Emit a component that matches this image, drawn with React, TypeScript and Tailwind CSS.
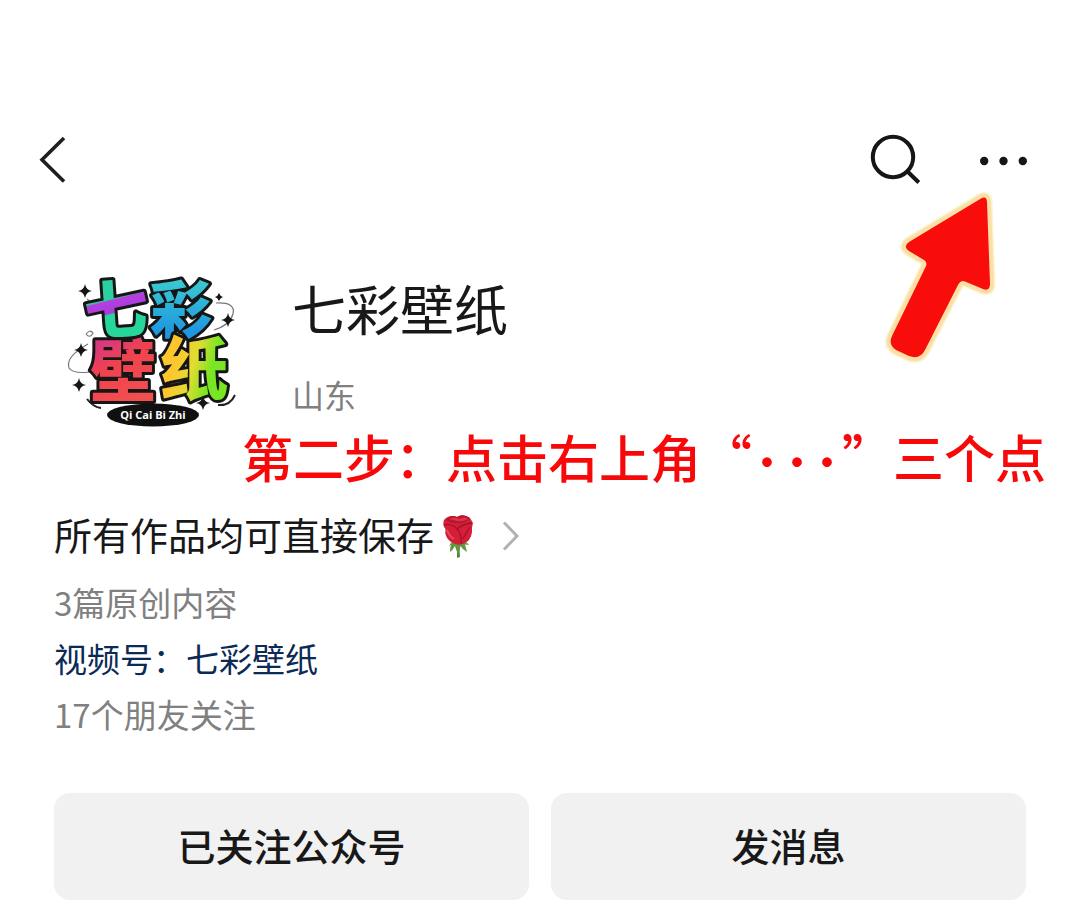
interface StatLine {
  text: string;
  href?: string;
}

const STATS: StatLine[] = [
  { text: "3篇原创内容" },
  { text: "视频号：七彩壁纸", href: "#channel" },
  { text: "17个朋友关注" },
];

const ACTIONS = ["已关注公众号", "发消息"];

const SPARKLES = [
  { x: 85, y: 291, r: 7 },
  { x: 228, y: 320, r: 7 },
  { x: 81, y: 350, r: 7 },
  { x: 79, y: 385, r: 7 },
  { x: 203, y: 403, r: 7 },
  { x: 219, y: 297, r: 4 },
];

function BackIcon() {
  return (
    <svg viewBox="38 134 32 52" className="h-[52px] w-8" fill="none" stroke="#1f1f1f" strokeWidth="3.6">
      <path d="M64 138 L42 159.800 L64 181.500" />
    </svg>
  );
}

function SearchIcon() {
  return (
    <svg viewBox="868 132 56 56" className="size-14" fill="none" stroke="#161616" strokeWidth="4">
      <circle cx="893" cy="157" r="20.200" />
      <path d="M907.500 171.500 L918.800 182.500" />
    </svg>
  );
}

function MoreIcon() {
  return (
    <svg viewBox="976 150 56 20" className="h-5 w-14" fill="#161616">
      <circle cx="984.200" cy="161" r="4.200" />
      <circle cx="1003.500" cy="161" r="4.200" />
      <circle cx="1022.800" cy="161" r="4.200" />
    </svg>
  );
}

function PointerArrow() {
  const shape =
    "M981 198.500 Q986.500 195.500 987 202 L990 284 Q990 291.500 983 289 L965 281.500 Q961 280 958.500 284 L925 350 Q920 360 909 356 L896 350 Q888 345 892 336 L926 266 Q927.500 262.500 924 260 L909 251 Q902.500 246.500 909 242 Z";
  return (
    <svg viewBox="880 188 120 180" className="h-[180px] w-[120px]" aria-hidden="true">
      <path d={shape} fill="none" stroke="#fdf3cf" strokeWidth="11" strokeLinejoin="round" />
      <path d={shape} fill="#f90d0b" stroke="#fbdfa6" strokeWidth="8" strokeLinejoin="round" />
      <path d={shape} fill="#f90d0b" />
    </svg>
  );
}

function Rose() {
  return (
    <svg viewBox="441 511 34 48" className="h-12 w-[34px]" aria-hidden="true">
      <path d="M457 543 L459 543 L460 558 L457 559 Z" fill="#4f8a3c" />
      <path
        d="M449 547 Q452 541 458 542 Q465 541 469 546 L465 545.500 Q466 549 467 553 Q462 550 460.500 547 Q460 552 458 555 Q456 551 455 547 Q453 551 450 553 Q450 548 451 546 Z"
        fill="#619844"
      />
      <path
        d="M444 521 Q449 515 457 518 Q463 514 470 519 L473 524 Q471.500 528 472 533 Q471 542 463 545 Q457 547 451 543 Q444 538 445.500 530 Q442 526 444 521 Z"
        fill="#d51f38"
      />
      <path d="M446 521 Q451 515 457 518 Q463 514 470 519 Q467 524 459 524 Q451 525 446 521 Z" fill="#b4182e" />
      <path d="M449 520 Q455 517 459 520 Q465 517 468 520 Q463 523 457 522 Z" fill="#df3148" />
      <path
        d="M444 526 Q453 524 458 531 Q462 536 461 545 M472 524 Q462 525 457 530 M470 528 Q466 534 463 540"
        fill="none"
        stroke="#a3122a"
        strokeWidth="1.300"
      />
      <path d="M447 531 Q449 537 454 540" fill="none" stroke="#e84a5d" strokeWidth="2" />
    </svg>
  );
}

function Logo() {
  return (
    <svg viewBox="54 252 200 200" className="size-[200px] shrink-0" role="img" aria-label="七彩壁纸">
      <defs>
        <linearGradient id="qi" gradientUnits="userSpaceOnUse" x1="111" y1="282" x2="121" y2="338">
          <stop offset="0.290" stopColor="#2cd0a0" />
          <stop offset="0.320" stopColor="#b63ee0" />
          <stop offset="0.530" stopColor="#a83cdc" />
          <stop offset="0.560" stopColor="#27d69a" />
        </linearGradient>
        <linearGradient id="cai" x1="0" y1="0" x2="0" y2="1">
          <stop offset="0.100" stopColor="#3fd3cf" />
          <stop offset="0.800" stopColor="#1e96e0" />
        </linearGradient>
        <linearGradient id="bi" x1="0" y1="0" x2="0.400" y2="1">
          <stop offset="0.100" stopColor="#c832a0" />
          <stop offset="0.550" stopColor="#f0424e" />
          <stop offset="1" stopColor="#f25050" />
        </linearGradient>
        <linearGradient id="zhi" x1="0" y1="0" x2="1" y2="0.400">
          <stop offset="0.350" stopColor="#fdc62e" />
          <stop offset="0.600" stopColor="#e2dc30" />
          <stop offset="0.850" stopColor="#78e622" />
        </linearGradient>
      </defs>
      <g fill="none" stroke="#777" strokeWidth="1.200">
        <path d="M216 303 Q236 302 233 314 Q230 325 214 330" />
        <path d="M88 344 Q65 357 69 368 Q73 374 89 372" />
        <path d="M87 299 L95 306 M86 334 q4 -5 7 -1 q-3 6 -7 1" />
      </g>
      <g fill="none" stroke="#222" strokeWidth="2">
        <path d="M87 399 Q93 407 101 408 M218 405 Q230 406 235 395" />
      </g>
      <g
        fontFamily="'Noto Sans CJK SC', sans-serif"
        fontWeight="900"
        stroke="#161616"
        strokeWidth="6"
        strokeLinejoin="round"
        paintOrder="stroke"
      >
        <text x="84" y="333" fontSize="64" fill="url(#qi)" transform="rotate(-4 116 310)">七</text>
        <text x="150" y="333" fontSize="62" fill="url(#cai)">彩</text>
        <text x="90" y="395" fontSize="66" fill="url(#bi)">壁</text>
        <text x="160" y="394" fontSize="68" fill="url(#zhi)">纸</text>
      </g>
      {SPARKLES.map(({ x, y, r }) => (
        <path
          key={`${x}-${y}`}
          fill="#151515"
          d={`M${x} ${y - r} Q${x + 1} ${y - 1} ${x + r} ${y} Q${x + 1} ${y + 1} ${x} ${y + r} Q${x - 1} ${y + 1} ${x - r} ${y} Q${x - 1} ${y - 1} ${x} ${y - r} Z`}
        />
      ))}
      <ellipse cx="153" cy="415" rx="46" ry="11.500" fill="#101010" />
      <text
        x="153"
        y="419"
        fontSize="11"
        fontWeight="700"
        fontFamily="'Open Sans', sans-serif"
        textAnchor="middle"
        fill="#fff"
      >
        Qi Cai Bi Zhi
      </text>
    </svg>
  );
}

export default function App() {
  return (
    <div className="min-h-screen bg-white pt-32 pb-4 font-['Noto_Sans_CJK_SC',sans-serif] text-[#181818]">
      <header className="relative flex h-16 items-center justify-between pr-12 pl-[38px]">
        <button type="button" aria-label="返回">
          <BackIcon />
        </button>
        <div className="flex items-center gap-[52px]">
          <button type="button" aria-label="搜索">
            <SearchIcon />
          </button>
          <button type="button" aria-label="更多">
            <MoreIcon />
          </button>
        </div>
        <div className="pointer-events-none absolute top-[60px] right-20 z-10">
          <PointerArrow />
        </div>
      </header>

      <main className="px-[54px]">
        <section className="mt-15 flex gap-[38px]">
          <Logo />
          <div className="pt-6">
            <h1 className="text-[54px] leading-16">七彩壁纸</h1>
            <p className="mt-[34px] text-[32px] leading-10 text-[#808080]">山东</p>
          </div>
        </section>

        <p className="-mt-7 -mr-5 h-16 text-right text-[51px] leading-16 font-medium whitespace-nowrap text-[#f80808]">
          第二步：点击右上角“
          {[0, 1, 2].map((dot) => (
            <span key={dot} className="inline-block w-[30px] text-center font-['Lato',sans-serif] font-bold">
              ·
            </span>
          ))}
          ”三个点
        </p>

        <a href="#about" className="mt-[22px] flex items-center text-[38px] leading-12">
          所有作品均可直接保存
          <span className="ml-[7px]">
            <Rose />
          </span>
          <svg viewBox="500 518 24 34" className="ml-6 h-[34px] w-6" fill="none" stroke="#b2b2b2" strokeWidth="3">
            <path d="M505 523.500 L518 537 L505 550.500" />
          </svg>
        </a>

        <ul className="mt-4 text-[33px] leading-14 text-[#808080]">
          {STATS.map(({ text, href }) => (
            <li key={text}>
              {href ? (
                <a href={href} className="text-[#0b2a55]">
                  {text}
                </a>
              ) : (
                text
              )}
            </li>
          ))}
        </ul>

        <div className="mt-[51px] grid grid-cols-2 gap-[22px]">
          {ACTIONS.map((label) => (
            <button
              key={label}
              type="button"
              className="h-[107px] rounded-2xl bg-[#f1f1f1] pb-1 text-[38px] font-medium"
            >
              {label}
            </button>
          ))}
        </div>
      </main>
    </div>
  );
}
